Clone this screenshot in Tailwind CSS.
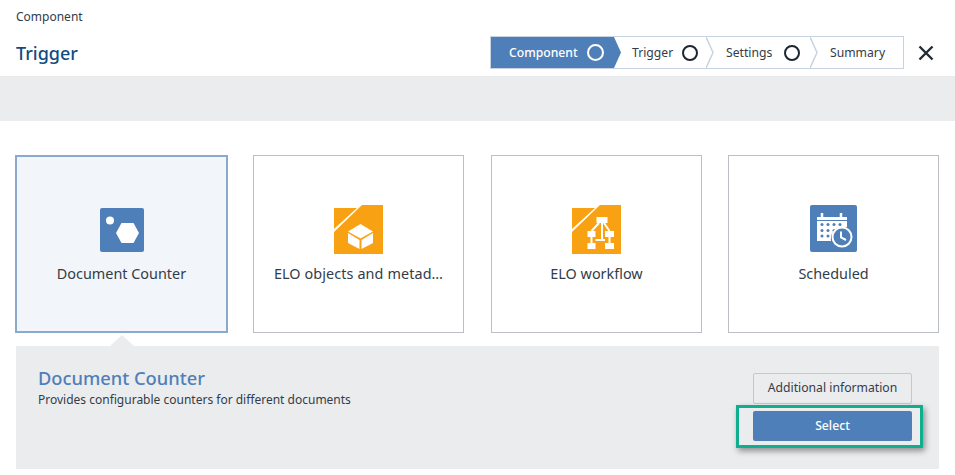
<!DOCTYPE html>
<html lang="en">
<head>
  <meta charset="UTF-8">
  <title>Trigger</title>
  <script src="https://cdn.jsdelivr.net/npm/@tailwindcss/browser@4"></script>
</head>
<body class="w-[955px] h-[475px] overflow-hidden bg-white font-['Noto_Sans',sans-serif] text-[#333c48]">
  <!-- Header -->
  <header class="h-[77px] border-b border-[#e8e9eb] pl-4 pr-4 flex flex-col">
    <div class="text-[12px] leading-4 pt-[9px]">Component</div>
    <div class="flex items-center justify-between mt-[11px]">
      <h1 class="text-[18px] leading-[32px] font-medium text-[#0f4c81]">Trigger</h1>
      <div class="flex items-center">
        <!-- Stepper -->
        <div class="flex w-[414px] h-[33px] border border-[#c9d3df] text-[12.2px]">
          <div class="w-[130px] flex items-center pl-[18px] bg-[#4f7fb8] text-white font-medium [clip-path:polygon(0_0,123px_0,100%_50%,123px_100%,0_100%)]">
            <span class="w-[69px] pt-[2px]">Component</span>
            <span class="ml-[9px] w-[17px] h-[17px] rounded-full border-2 border-white"></span>
          </div>
          <div class="w-[93px] flex items-center pl-[11px]">
            <span class="w-[42px] pt-[2px]">Trigger</span>
            <span class="ml-[8px] w-[16px] h-[16px] rounded-full border-2 border-[#1c2530]"></span>
          </div>
          <svg class="w-[8px] h-full -ml-[8px]" viewBox="0 0 8 31" fill="none" stroke="#c9d3df" stroke-width="1.5"><path d="M0 0 7 15.5 0 31"/></svg>
          <div class="w-[104px] flex items-center pl-[12px]">
            <span class="w-[50px] pt-[2px]">Settings</span>
            <span class="ml-[8px] w-[16px] h-[16px] rounded-full border-2 border-[#1c2530]"></span>
          </div>
          <svg class="w-[8px] h-full -ml-[8px]" viewBox="0 0 8 31" fill="none" stroke="#c9d3df" stroke-width="1.5"><path d="M0 0 7 15.5 0 31"/></svg>
          <div class="flex items-center pl-[12px] pt-[2px]">Summary</div>
        </div>
        <!-- Close -->
        <svg class="ml-[14px] mr-[5px] w-[16px] h-[16px]" viewBox="0 0 16 16" fill="none" stroke="#222b35" stroke-width="2.4"><path d="M1.5 1.5 14.5 14.5M14.5 1.5 1.5 14.5"/></svg>
      </div>
    </div>
  </header>

  <!-- Gray band -->
  <div class="h-[44px] bg-[#ebecee]"></div>

  <main class="pl-[15px] pr-[16px]">
    <!-- Cards -->
    <div class="flex mt-[34px] h-[178px] text-[14.4px]">
      <div class="w-[213px] border-2 border-[#8ba8cd] bg-[#f2f5fa] flex flex-col items-center">
        <svg class="mt-[51px] w-[44px] h-[44px]" viewBox="0 0 44 44">
          <rect width="44" height="44" rx="2" fill="#4f7fb8"/>
          <circle cx="10" cy="12.500" r="4" fill="#fff"/>
          <path d="M21.500 15H33.500L39 25 33.500 35H21.500L16 25Z" fill="#fff"/>
        </svg>
        <div class="mt-[12px] leading-5">Document Counter</div>
      </div>
      <div class="w-[211px] ml-[25px] border border-[#bcc0c6] flex flex-col items-center">
        <svg class="mt-[49px] w-[49px] h-[49px]" viewBox="0 0 49 49">
          <path d="M0 3H23L0 24Z" fill="#f7a113"/>
          <path d="M28 0H49V49H0V27Z" fill="#f7a113"/>
          <path d="M26.500 19 39 26.500 26.500 33.500 14 26.500Z" fill="#fff"/>
          <path d="M14 28 25.500 35V44L14 38Z" fill="#fff"/>
          <path d="M39 28 27.500 35V44L39 38Z" fill="#fff"/>
        </svg>
        <div class="mt-[10px] leading-5 tracking-[0.1px]">ELO objects and metad…</div>
      </div>
      <div class="w-[211px] ml-[27px] border border-[#bcc0c6] flex flex-col items-center">
        <svg class="mt-[49px] w-[49px] h-[49px]" viewBox="0 0 49 49">
          <path d="M0 3H23L0 24Z" fill="#f7a113"/>
          <path d="M28 0H49V49H0V27Z" fill="#f7a113"/>
          <g fill="#fff">
            <rect x="24.500" y="12" width="11" height="6"/>
            <rect x="15.500" y="26" width="8" height="6"/>
            <rect x="33" y="26" width="9" height="6"/>
            <rect x="15.500" y="38" width="8" height="6"/>
            <rect x="33" y="38" width="9" height="6"/>
          </g>
          <path d="M30 18V35M19.500 26 27 18M37.500 26 32 18M19.500 32V38M37.500 32V38M23.500 35H33" fill="none" stroke="#fff" stroke-width="2"/>
        </svg>
        <div class="mt-[10px] leading-5">ELO workflow</div>
      </div>
      <div class="w-[211px] ml-[26px] border border-[#bcc0c6] flex flex-col items-center">
        <svg class="mt-[49px] w-[47px] h-[47px]" viewBox="0 0 47 47">
          <rect width="47" height="47" rx="2" fill="#4f7fb8"/>
          <path d="M7 12H37V22H32A12 12 0 0 0 21 36H7Z" fill="#fff"/>
          <path d="M12 8V13M31 8V13" stroke="#fff" stroke-width="2.500"/>
          <path d="M7 15.500H37" stroke="#4f7fb8" stroke-width="1"/>
          <g fill="#4f7fb8">
            <circle cx="12" cy="19.500" r="1.500"/><circle cx="18" cy="19.500" r="1.500"/><circle cx="24" cy="19.500" r="1.500"/><circle cx="30" cy="19.500" r="1.500"/>
            <circle cx="12" cy="25.500" r="1.500"/><circle cx="18" cy="25.500" r="1.500"/><circle cx="24" cy="25.500" r="1.500"/>
            <circle cx="12" cy="31" r="1.500"/><circle cx="18" cy="31" r="1.500"/>
          </g>
          <circle cx="32" cy="32" r="9.500" fill="#4f7fb8" stroke="#fff" stroke-width="2"/>
          <path d="M31 26.500V32.500L36 35" fill="none" stroke="#fff" stroke-width="2"/>
        </svg>
        <div class="mt-[12px] leading-5">Scheduled</div>
      </div>
    </div>

    <!-- Detail panel -->
    <section class="relative ml-px mt-[13px] h-[123px] bg-[#ebecee] flex justify-between pl-[22px] pr-[27px] pt-[21px]">
      <span class="absolute left-[94px] -top-[11px] w-0 h-0 border-x-[12px] border-x-transparent border-b-[11px] border-b-[#ebecee]"></span>
      <div>
        <h2 class="text-[18.3px] leading-[22px] font-medium text-[#4f7fb8]">Document Counter</h2>
        <p class="text-[12px] leading-4 mt-[3px]">Provides configurable counters for different documents</p>
      </div>
      <div class="relative w-[159px] flex flex-col gap-[7px] pt-[6px] text-[12.2px]">
        <button class="h-[31px] border border-[#c5c8cc] rounded-[2px]">Additional information</button>
        <button class="h-[30px] bg-[#4f7fb8] text-white rounded-[2px] font-medium">Select</button>
        <!-- highlight annotation -->
        <span class="absolute -left-[17px] top-[38px] w-[187px] h-[43px] border-[3px] border-[#0fae8f] shadow-[2px_3px_6px_rgba(0,0,0,0.4)]"></span>
      </div>
    </section>
  </main>
</body>
</html>
